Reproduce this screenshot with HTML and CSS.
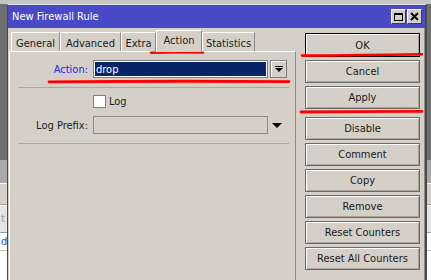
FILE: index.html
```html
<!DOCTYPE html>
<html>
<head>
<meta charset="utf-8">
<link rel="stylesheet" href="styles.css">
</head>
<body>
<div class="desk">
  <div class="d-top"></div>
  <div class="d-dark"></div>
  <div class="d-gray"></div>
  <div class="d-bar"></div>
  <div class="d-row"><span class="d-t">t</span></div>
  <div class="d-row2"><span class="d-d">d</span></div>
  <div class="d-white"></div>
</div>

<div class="win">
  <div class="titlebar">
    <span class="title">New Firewall Rule</span>
    <div class="tbtns">
      <span class="tbtn"><svg width="11" height="10" viewBox="0 0 11 10"><rect x="1.5" y="1.5" width="8" height="7" fill="none" stroke="#000" stroke-width="1"/><rect x="1" y="1" width="9" height="2" fill="#000"/></svg></span>
      <span class="tbtn"><svg width="9" height="9" viewBox="0 0 9 9"><path d="M1 1 L8 8 M8 1 L1 8" stroke="#000" stroke-width="2"/></svg></span>
    </div>
  </div>
  <div class="wbody">
    <div class="leftcol">
      <div class="tabs">
        <span class="tab t-general">General</span>
        <span class="tab t-advanced">Advanced</span>
        <span class="tab t-extra">Extra</span>
        <span class="tab sel t-action">Action</span>
        <span class="tab t-stats">Statistics</span>
      </div>
      <div class="panel">
        <div class="frow">
          <span class="flabel blue">Action:</span>
          <span class="fsel">drop</span>
          <span class="ddbtn"><svg width="8" height="7" viewBox="0 0 8 7"><rect x="0" y="0" width="8" height="1" fill="#000"/><path d="M0 2 L8 2 L4 6 Z" fill="#000"/></svg></span>
        </div>
        <div class="sep first"></div>
        <div class="chkrow">
          <span class="chk"></span>
          <span class="chklabel">Log</span>
        </div>
        <div class="frow prefix">
          <span class="flabel">Log Prefix:</span>
          <span class="finput"></span>
          <span class="tri"></span>
        </div>
        <div class="sep"></div>
      </div>
    </div>
    <div class="btncol">
      <span class="btn def">OK</span>
      <span class="btn">Cancel</span>
      <span class="btn">Apply</span>
      <span class="btn spaced">Disable</span>
      <span class="btn">Comment</span>
      <span class="btn">Copy</span>
      <span class="btn">Remove</span>
      <span class="btn">Reset Counters</span>
      <span class="btn">Reset All Counters</span>
    </div>
  </div>
</div>

<svg class="marks" width="431" height="280" viewBox="0 0 431 280">
  <path d="M151 52.8 Q176 52 203 52.6" stroke="#ff0000" stroke-width="2.4" fill="none" stroke-linecap="round"/>
  <path d="M302 55.6 Q360 55.2 422 54.2" stroke="#ff0000" stroke-width="2.6" fill="none" stroke-linecap="round"/>
  <path d="M49 81.8 Q170 80.8 289 81.6" stroke="#ff0000" stroke-width="2.8" fill="none" stroke-linecap="round"/>
  <path d="M301 112 Q360 111.4 422 111.4" stroke="#ff0000" stroke-width="2.8" fill="none" stroke-linecap="round"/>
</svg>
</body>
</html>
```

FILE: styles.css
```css
* { box-sizing: border-box; }
html, body { margin: 0; padding: 0; }
body {
  width: 431px;
  height: 280px;
  overflow: hidden;
  position: relative;
  background: #6e6e6e;
  font-family: "DejaVu Sans Condensed", "DejaVu Sans", sans-serif;
  font-stretch: condensed;
  font-size: 11px;
  color: #1c1c1c;
}

/* desktop / background window */
.desk { display: flex; flex-direction: column; height: 280px; }
.d-top { height: 4px; background: #c6c6c6; }
.d-dark { height: 156px; background: #6e6e6e; }
.d-gray { height: 23px; background: #a9a9a9; }
.d-bar { height: 22px; background: #d4d0c8; border-top: 1px solid #fff; border-bottom: 1px solid #a0a0a0; }
.d-row { height: 28px; background: #e4e4e4; border-top: 1px solid #fff; border-bottom: 1px solid #a0a0a0; color: #9a9a9a; line-height: 26px; white-space: nowrap; padding-left: 1px; }
.d-row2 { height: 18px; background: #fff; border-bottom: 1px solid #c0c0c0; color: #2060c0; line-height: 17px; white-space: nowrap; padding-left: 1px; }
.d-white { flex: 1; background: #fff; }

/* window */
.win {
  position: absolute;
  left: 7px;
  top: 4px;
  width: 420px;
  height: 276px;
  background: #d4d0c8;
  border-top: 1px solid #e4e4e4;
  border-left: 1px solid #4a4a4a;
  border-right: 2px solid #4a4a4a;
  box-shadow: inset -1px 0 #8a8a8a;
  display: flex;
  flex-direction: column;
}
.titlebar {
  height: 23px;
  flex: none;
  background: #4a4ac6;
  color: #fff;
  display: flex;
  align-items: center;
  padding: 0 3px 0 4px;
}
.title { flex: 1; }
.tbtns { display: flex; gap: 1px; }
.tbtn {
  width: 15px;
  height: 15px;
  background: #d4d0c8;
  border: 1px solid;
  border-color: #fff #404040 #404040 #fff;
  display: flex;
  align-items: center;
  justify-content: center;
}

.wbody {
  flex: 1;
  display: flex;
  gap: 9px;
  padding: 0 5px 0 1px;
  min-height: 0;
}

.leftcol { width: 287px; display: flex; flex-direction: column; padding-top: 2px; }
.tabs {
  display: flex;
  align-items: flex-end;
  height: 22px;
  padding-left: 2px;
  margin-bottom: -1px;
  position: relative;
  z-index: 1;
}
.tab {
  height: 19px;
  margin-bottom: 1px;
  padding-top: 2px;
  display: flex;
  align-items: center;
  justify-content: center;
  background: #d4d0c8;
  border-top: 1px solid #fff;
  border-left: 1px solid #fff;
  border-right: 1px solid #8a8a8a;
  white-space: nowrap;
}
.tab.sel { height: 22px; margin-bottom: 0; padding: 0 0 2px; }
.t-general { width: 49px; }
.t-advanced { width: 61px; }
.t-extra { width: 35px; }
.t-action { width: 46px; }
.t-stats { width: 53px; }

.panel {
  flex: 1;
  border-top: 1px solid #fff;
  border-left: 1px solid #fff;
  border-right: 1px solid #8a8a8a;
  padding: 8px 6px 0 0;
}
.frow { display: flex; align-items: center; height: 18px; }
.flabel { width: 78px; margin-right: 5px; text-align: right; }
.flabel.blue { color: #2424e8; }
.fsel {
  width: 175px;
  height: 18px;
  border: 1px solid #808080;
  background: #0a246a;
  box-shadow: inset 0 0 0 1px #fff;
  color: #fff;
  padding-left: 2px;
  display: flex;
  align-items: center;
}
.ddbtn {
  width: 17px;
  height: 18px;
  margin-left: 2px;
  border: 1px solid #808080;
  box-shadow: inset 1px 1px #fff;
  display: flex;
  align-items: center;
  justify-content: center;
}
.sep { height: 1px; background: #aca89f; margin: 9px 0 0 8px; }
.chkrow { display: flex; align-items: center; height: 13px; margin: 7px 0 0 83px; }
.chk { width: 13px; height: 13px; background: #fff; border: 1px solid #808080; }
.chklabel { margin-left: 3px; }
.frow.prefix { margin-top: 8px; }
.finput { width: 175px; height: 18px; border: 1px solid #8c8c8c; }
.tri {
  margin-left: 4px;
  width: 0;
  height: 0;
  border-left: 5px solid transparent;
  border-right: 5px solid transparent;
  border-top: 5px solid #000;
}

.btncol { width: 115px; display: flex; flex-direction: column; gap: 3px; padding-top: 5px; }
.btn {
  height: 23px;
  flex: none;
  border: 1px solid #6a6a6a;
  box-shadow: inset 1px 1px #fff, inset -1px -1px #a8a49c;
  display: flex;
  align-items: center;
  justify-content: center;
  color: #1a1a1a;
  white-space: nowrap;
}
.btn.def { height: 24px; border-color: #000; }
.btn.spaced { margin-top: 5px; }

.marks { position: absolute; left: 0; top: 0; pointer-events: none; }
```
